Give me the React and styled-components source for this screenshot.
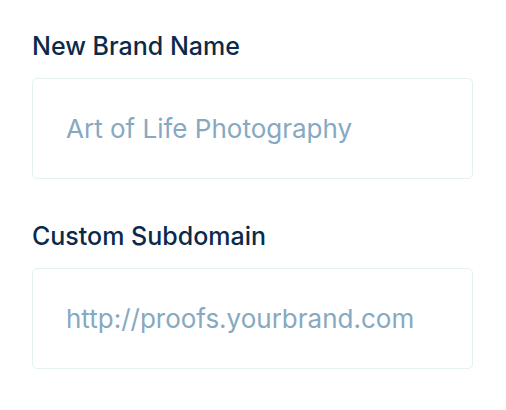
import React from 'react'
import styled, { createGlobalStyle } from 'styled-components'

const GlobalStyle = createGlobalStyle`
  html, body {
    margin: 0;
    padding: 0;
    background: #FFF;
  }
`

const Form = styled.div`
  display: flex;
  flex-direction: column;
  gap: 42px;
  padding: 31px 33px 0px 32px;
  width: 441px;
  font-family: Inter, "Noto Sans", sans-serif;
`

const Field = styled.label`
  display: flex;
  flex-direction: column;
  gap: 17px;
`

const Label = styled.div`
  color: #0B2A4A;
  font-size: 25px;
  font-weight: 500;
  line-height: 30px;
  letter-spacing: 0px;
`

const Input = styled.input`
  box-sizing: border-box;
  height: 101px;
  width: 100%;
  padding: 0px 33px;
  border: 1.5px solid #E5F0F0;
  border-radius: 5px;
  background: #FFF;
  outline: none;
  font-family: inherit;
  font-size: 26px;
  color: #0B2A4A;
  &::placeholder {
    color: #86A9C1;
  }
`

const App = () => {
  return (
    <>
      <GlobalStyle />
      <Form>
        <Field>
          <Label>New Brand Name</Label>
          <Input placeholder="Art of Life Photography" />
        </Field>
        <Field>
          <Label>Custom Subdomain</Label>
          <Input placeholder="http://proofs.yourbrand.com" />
        </Field>
      </Form>
    </>
  )
}

export default App
